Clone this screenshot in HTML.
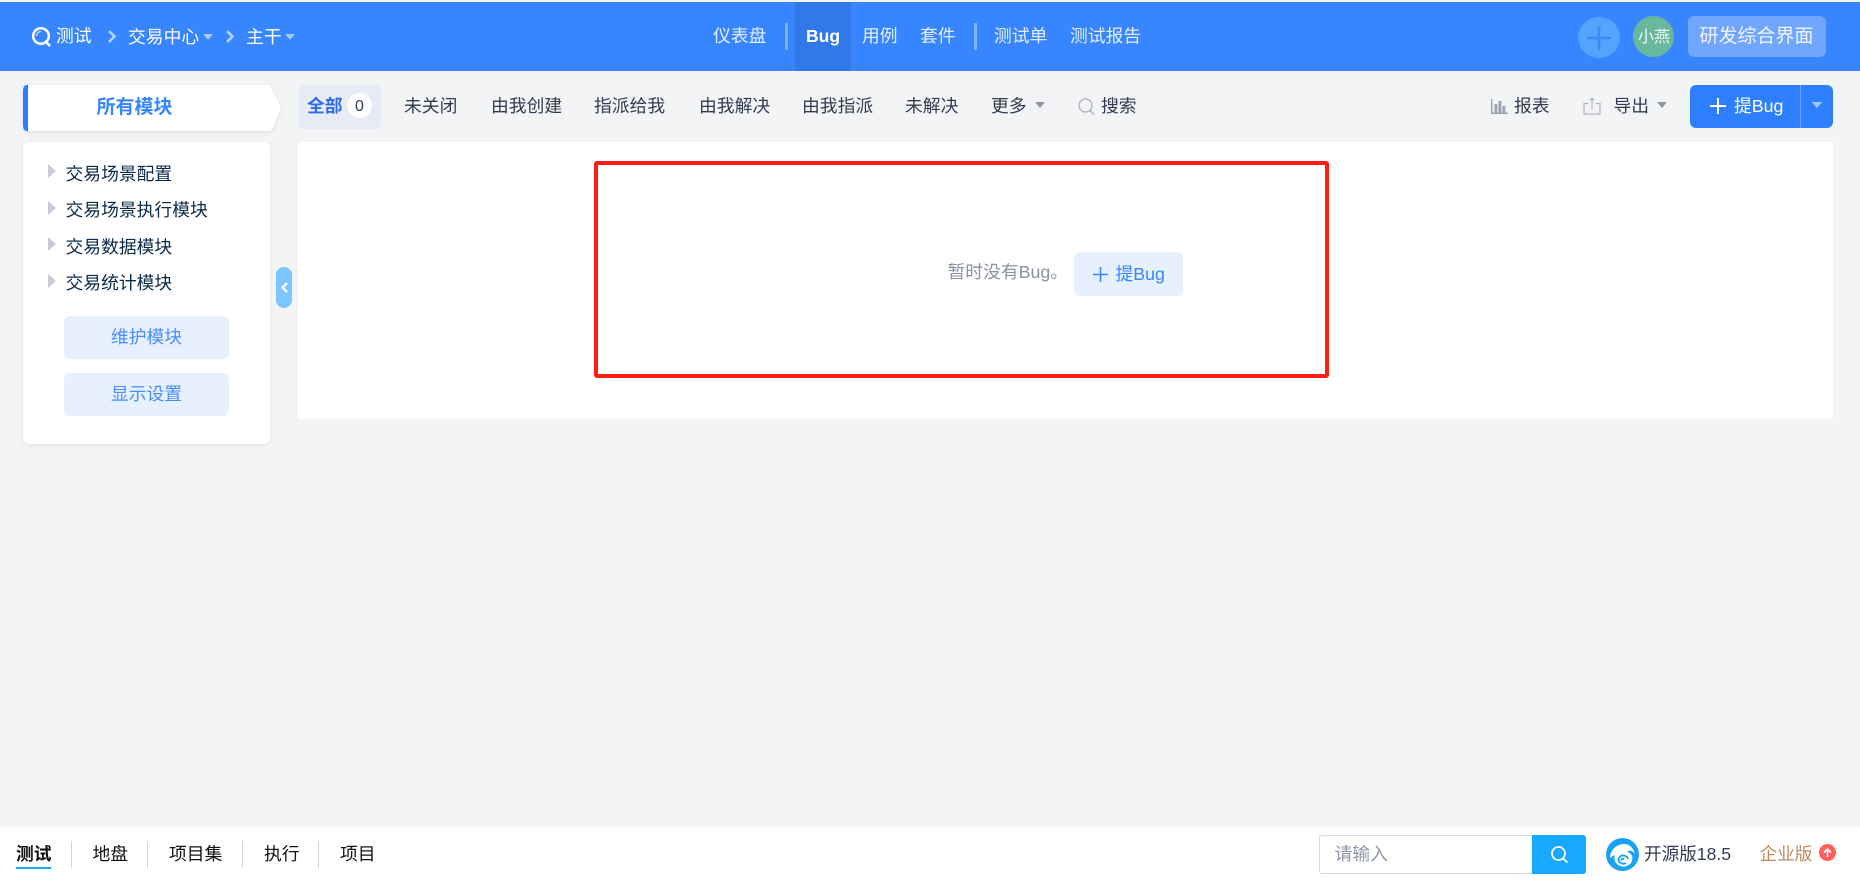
<!DOCTYPE html>
<html lang="zh-CN">
<head>
<meta charset="utf-8">
<title>Bug - 测试</title>
<style>
html,body{margin:0;padding:0;width:1860px;height:881px;overflow:hidden;background:#f3f4f6}
body{position:relative;font-family:"Liberation Sans","Noto Sans CJK SC",sans-serif;font-size:17.8px;color:#313c52}
.a{position:absolute;display:block}
.t{position:absolute;white-space:nowrap;line-height:20px;height:20px}
.w{color:#fff}
.h{color:#e3eeff}
.mod{color:#0b2a4a}
.side-btn{position:absolute;left:64px;width:165px;height:43px;background:#e6f0ff;border-radius:6px;color:#4a8dff;text-align:center;line-height:43px}
.tri{position:absolute;left:48px;width:0;height:0;border-left:8px solid #c9ccd8;border-top:7.5px solid transparent;border-bottom:7.5px solid transparent}
.car{position:absolute;width:0;height:0;border-top:6px solid #8f96a3;border-left:5.5px solid transparent;border-right:5.5px solid transparent}
.vd{position:absolute;top:841px;width:1px;height:27px;background:#d4d4d4}
svg{position:absolute;display:block;overflow:visible}
.b{color:#111}
</style>
</head>
<body>
<!-- header -->
<div class="a" style="left:0;top:2px;width:1860px;height:69px;background:#3785ff"></div>
<svg style="left:31px;top:26px" width="22" height="22" viewBox="0 0 22 22" fill="none" stroke="#fff" stroke-width="2.5"><circle cx="10" cy="10" r="7.8"/><path d="M14 15l5 5"/><path d="M5.500 10a4.500 4.500 0 0 1 4.500-4.500" stroke-width="1.200" stroke="#cfe1ff"/></svg>
<span class="t w" style="left:56px;top:26px">测试</span>
<svg style="left:107px;top:30px" width="10" height="13" viewBox="0 0 10 13" fill="none" stroke="#b6d2ff" stroke-width="2.6"><path d="M2 1l5.500 5.500L2 12"/></svg>
<span class="t w" style="left:128px;top:27px">交易中心</span>
<i class="car" style="left:203px;top:34px;border-top-color:#a5c8ff"></i>
<svg style="left:225px;top:30px" width="10" height="13" viewBox="0 0 10 13" fill="none" stroke="#b6d2ff" stroke-width="2.6"><path d="M2 1l5.500 5.500L2 12"/></svg>
<span class="t w" style="left:246px;top:27px">主干</span>
<i class="car" style="left:285px;top:34px;border-top-color:#a5c8ff"></i>

<span class="t h" style="left:713px;top:26px">仪表盘</span>
<div class="a" style="left:785px;top:23px;width:3px;height:27px;background:#7fb0ff"></div>
<div class="a" style="left:795px;top:2px;width:56px;height:69px;background:#3378e8"></div>
<span class="t w" style="left:806px;top:26px;font-weight:700;font-size:17.5px">Bug</span>
<span class="t h" style="left:862px;top:26px">用例</span>
<span class="t h" style="left:920px;top:26px">套件</span>
<div class="a" style="left:974px;top:23px;width:3px;height:27px;background:#7fb0ff"></div>
<span class="t h" style="left:994px;top:26px">测试单</span>
<span class="t h" style="left:1070px;top:26px">测试报告</span>

<div class="a" style="left:1578px;top:17px;width:42px;height:41px;border-radius:50%;background:#52a4ff"></div>
<svg style="left:1586px;top:25px" width="26" height="26" viewBox="0 0 26 26"><path d="M13 1v24M1 13h24" stroke="#3c8af5" stroke-width="2.600" fill="none"/></svg>
<div class="a" style="left:1633px;top:16px;width:41px;height:41px;border-radius:50%;background:#68b89e"></div>
<span class="t" style="left:1638px;top:28px;font-size:16px;color:#eef8f4">小燕</span>
<div class="a" style="left:1688px;top:16px;width:138px;height:41px;border-radius:6px;background:#70a6ff"></div>
<span class="t" style="left:1699.500px;top:27px;font-size:19px;color:#f0f6ff">研发综合界面</span>

<!-- module tab -->
<svg style="left:23px;top:85px;filter:drop-shadow(0 1px 2px rgba(40,50,80,.12))" width="258" height="46" viewBox="0 0 258 46">
<path d="M6 0H247L258 23 250 43Q248 46 245 46H6Q0 46 0 40V6Q0 0 6 0Z" fill="#fff"/>
<path d="M5 0H3Q0 1 0 6V40Q0 45 3 46H5Z" fill="#2e7fff"/>
</svg>
<span class="t" style="left:96.500px;top:98px;font-weight:700;font-size:19px;color:#3785ff">所有模块</span>

<!-- filter bar -->
<div class="a" style="left:298px;top:85px;width:83px;height:44px;border-radius:6px;background:#e6ebf5"></div>
<span class="t" style="left:307px;top:96px;font-weight:700;color:#2e6be0">全部</span>
<div class="a" style="left:347px;top:93px;width:25px;height:25px;border-radius:50%;background:#fff"></div>
<span class="t" style="left:347px;top:97px;width:25px;text-align:center;font-size:16px">0</span>
<span class="t" style="left:404px;top:96px">未关闭</span>
<span class="t" style="left:491px;top:96px">由我创建</span>
<span class="t" style="left:594px;top:96px">指派给我</span>
<span class="t" style="left:699px;top:96px">由我解决</span>
<span class="t" style="left:802px;top:96px">由我指派</span>
<span class="t" style="left:905px;top:96px">未解决</span>
<span class="t" style="left:991px;top:96px">更多</span>
<i class="car" style="left:1035px;top:102px"></i>
<svg style="left:1078px;top:98px" width="17" height="17" viewBox="0 0 17 17" fill="none" stroke="#aab0bb" stroke-width="1.300"><circle cx="7.500" cy="7.500" r="6.500"/><path d="M12 12.500l4 4"/></svg>
<span class="t" style="left:1101px;top:96px">搜索</span>

<svg style="left:1491px;top:99px" width="17" height="15" viewBox="0 0 17 15" fill="#9aa1ad"><rect x="0" y="0" width="1.400" height="15"/><rect x="0" y="13.600" width="17" height="1.400"/><rect x="3.500" y="5" width="2.800" height="9"/><rect x="7.500" y="2" width="2.800" height="12"/><rect x="11.500" y="7" width="2.800" height="7"/></svg>
<span class="t" style="left:1514px;top:96px">报表</span>
<svg style="left:1583px;top:97px" width="18" height="18" viewBox="0 0 18 18" fill="none" stroke="#b0b5bf" stroke-width="1.200"><path d="M5.500 6.500H1v10.500h16V6.500h-4.500"/><path d="M9 12V1M6.500 3.500L9 1l2.500 2.500"/></svg>
<span class="t" style="left:1613.500px;top:96px">导出</span>
<i class="car" style="left:1657px;top:102px"></i>
<div class="a" style="left:1690px;top:85px;width:143px;height:43px;border-radius:6px;background:#2e7fff"></div>
<div class="a" style="left:1800px;top:85px;width:1px;height:43px;background:#6ea6ff"></div>
<svg style="left:1710px;top:98px" width="16" height="16" viewBox="0 0 16 16"><path d="M8 0v16M0 8h16" stroke="#fff" stroke-width="2" fill="none"/></svg>
<span class="t w" style="left:1734px;top:96px">提Bug</span>
<i class="car" style="left:1812px;top:102px;border-top-color:#a5c8ff"></i>

<!-- sidebar -->
<div class="a" style="left:23px;top:142px;width:247px;height:302px;background:#fff;border-radius:6px;box-shadow:0 1px 3px rgba(40,50,80,.1)"></div>
<i class="tri" style="top:164px"></i><span class="t mod" style="left:65.500px;top:164px">交易场景配置</span>
<i class="tri" style="top:201px"></i><span class="t mod" style="left:65.500px;top:200px">交易场景执行模块</span>
<i class="tri" style="top:237px"></i><span class="t mod" style="left:65.500px;top:237px">交易数据模块</span>
<i class="tri" style="top:274px"></i><span class="t mod" style="left:65.500px;top:273px">交易统计模块</span>
<div class="side-btn" style="top:316px">维护模块</div>
<div class="side-btn" style="top:373px">显示设置</div>
<div class="a" style="left:276px;top:267px;width:16px;height:41px;border-radius:8px;background:#7cc6ff"></div>
<svg style="left:281px;top:282px" width="7" height="11" viewBox="0 0 7 11" fill="none" stroke="#fff" stroke-width="2.400"><path d="M6 1L1.500 5.500 6 10"/></svg>

<!-- main -->
<div class="a" style="left:298px;top:142px;width:1535px;height:277px;background:#fff"></div>
<div class="a" style="left:594px;top:161px;width:735px;height:217px;box-sizing:border-box;border:4px solid #ff1c12;border-radius:3px"></div>
<span class="t" style="left:947.500px;top:262px;color:#8b92a0">暂时没有Bug。</span>
<div class="a" style="left:1074px;top:252px;width:109px;height:44px;border-radius:6px;background:#e6f0ff"></div>
<svg style="left:1093px;top:267px" width="15" height="15" viewBox="0 0 15 15"><path d="M7.500 0v15M0 7.500h15" stroke="#3785ff" stroke-width="1.600" fill="none"/></svg>
<span class="t" style="left:1115.500px;top:264px;color:#3785ff">提Bug</span>

<!-- footer -->
<div class="a" style="left:0;top:827px;width:1860px;height:54px;background:#fff"></div>
<span class="t b" style="left:16px;top:844px;font-weight:700">测试</span>
<div class="a" style="left:16px;top:867px;width:35px;height:2px;background:#17a8ff"></div>
<i class="vd" style="left:71px"></i>
<span class="t b" style="left:92.500px;top:844px">地盘</span>
<i class="vd" style="left:147px"></i>
<span class="t b" style="left:169px;top:844px">项目集</span>
<i class="vd" style="left:242px"></i>
<span class="t b" style="left:264px;top:844px">执行</span>
<i class="vd" style="left:318px"></i>
<span class="t b" style="left:340px;top:844px">项目</span>

<div class="a" style="left:1319px;top:835px;width:267px;height:39px;box-sizing:border-box;border:1px solid #d8dbde;border-radius:3px;background:#fff"></div>
<div class="a" style="left:1532px;top:835px;width:54px;height:39px;background:#17a8ff;border-radius:0 3px 3px 0"></div>
<svg style="left:1550px;top:845px" width="19" height="19" viewBox="0 0 19 19" fill="none" stroke="#fff" stroke-width="1.800"><circle cx="8.500" cy="8.500" r="6.500"/><path d="M13 13.500l4.500 4"/></svg>
<span class="t" style="left:1334.500px;top:844px;color:#8e97a6">请输入</span>

<svg style="left:1606px;top:838px" width="33" height="33" viewBox="0 0 33 33">
<circle cx="16.500" cy="16.500" r="16.500" fill="#1aa3f5"/>
<path d="M4 20C4 12 11 6 18 6C23 6 27 9 29 16C26 12 23 12 21 14C26 15 28 20 25 25C22 29 15 30 11 26C8 23 8 20 9 17C7 18 5 19 4 20Z" fill="#fff"/>
<path d="M22 21C21 17 15 16 13 20C11 24 16 27 20 25M18 21.500C17 20 15 21 15.500 22.500" fill="none" stroke="#1aa3f5" stroke-width="1.800"/>
</svg>
<span class="t" style="left:1644px;top:844px;font-size:17.600px">开源版18.5</span>
<span class="t" style="left:1759.500px;top:844px;color:#c08a5a;font-size:17.600px">企业版</span>
<div class="a" style="left:1819px;top:844px;width:17px;height:17px;border-radius:50%;background:#ff5f5f"></div>
<svg style="left:1823px;top:848px" width="9" height="9" viewBox="0 0 9 9" fill="none" stroke="#fff" stroke-width="1.600"><path d="M4.500 9V1M1 4.500L4.500 1 8 4.500"/></svg>
</body>
</html>
